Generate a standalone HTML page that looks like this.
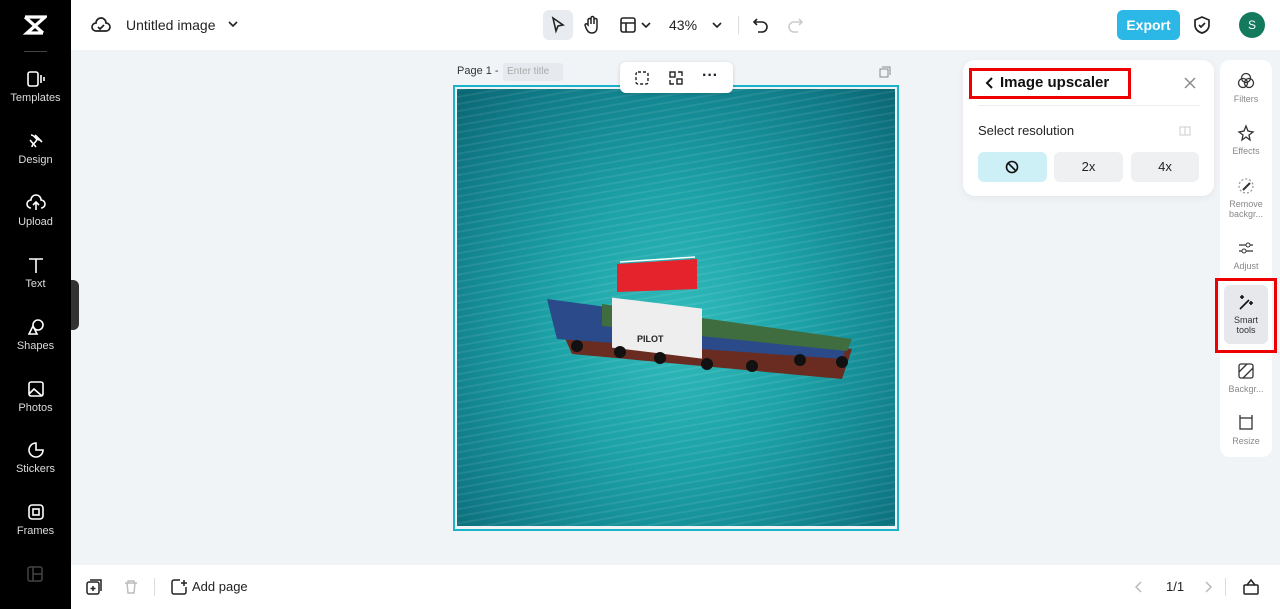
<!DOCTYPE html>
<html><head><meta charset="utf-8"><style>
*{margin:0;padding:0;box-sizing:border-box}
body{width:1280px;height:609px;overflow:hidden;font-family:"Liberation Sans",sans-serif;background:#f1f4f7;position:relative;color:#1f2329}
.abs{position:absolute}
#side{left:0;top:0;width:71px;height:609px;background:#000;color:#fff}
.si{position:absolute;left:0;width:71px;text-align:center;font-size:11px;color:#ddd}
.si svg{display:block;margin:0 auto 4px}
#top{left:71px;top:0;width:1209px;height:50px;background:#fff}
#bot{left:71px;top:565px;width:1209px;height:44px;background:#fff}
.rt{position:absolute;left:0;width:52px;text-align:center;font-size:9px;color:#888;line-height:10px}
.rt svg{display:block;margin:0 auto 4px}
</style></head><body>
<div id="side" class="abs">
 <svg class="abs" style="left:23px;top:14px" width="24" height="22" viewBox="0 0 24 22"><path d="M2 3h20L4 19h16M2 3l18 16M22 3L4 19" stroke="#fff" stroke-width="3.2" fill="none"/></svg>
 <div class="abs" style="left:24px;top:51px;width:23px;height:1px;background:#444"></div>
 <div class="si" style="top:70px"><svg width="20" height="18" viewBox="0 0 20 18"><rect x="2" y="2" width="10" height="14" rx="2" stroke="#fff" stroke-width="1.6" fill="none"/><path d="M15 5v8M18 7v4" stroke="#fff" stroke-width="1.6"/></svg>Templates</div>
 <div class="si" style="top:132px"><svg width="20" height="18" viewBox="0 0 20 18"><path d="M5 3c4 0 4 5 9 5M6 15c0-4 5-4 5-9M4 8l6 7M9 3l7 7" stroke="#fff" stroke-width="1.6" fill="none"/></svg>Design</div>
 <div class="si" style="top:194px"><svg width="20" height="18" viewBox="0 0 20 18"><path d="M5 14a4 4 0 0 1 0-8a5 5 0 0 1 10 0a4 4 0 0 1 0 8M10 9v7M7 11l3-3 3 3" stroke="#fff" stroke-width="1.6" fill="none"/></svg>Upload</div>
 <div class="si" style="top:256px"><svg width="20" height="18" viewBox="0 0 20 18"><path d="M3 3h14M10 3v14" stroke="#fff" stroke-width="1.6"/></svg>Text</div>
 <div class="si" style="top:318px"><svg width="20" height="18" viewBox="0 0 20 18"><circle cx="12" cy="7" r="5" stroke="#fff" stroke-width="1.6" fill="none"/><path d="M3 16l4-8 4 8z" stroke="#fff" stroke-width="1.6" fill="none"/></svg>Shapes</div>
 <div class="si" style="top:380px"><svg width="20" height="18" viewBox="0 0 20 18"><rect x="3" y="2" width="14" height="14" rx="2" stroke="#fff" stroke-width="1.6" fill="none"/><path d="M3 14l5-5 8 7" stroke="#fff" stroke-width="1.6" fill="none"/></svg>Photos</div>
 <div class="si" style="top:441px"><svg width="20" height="18" viewBox="0 0 20 18"><path d="M17 9a7 7 0 1 1-7-7v7z" stroke="#fff" stroke-width="1.6" fill="none"/></svg>Stickers</div>
 <div class="si" style="top:503px"><svg width="20" height="18" viewBox="0 0 20 18"><rect x="3" y="2" width="14" height="14" rx="3" stroke="#fff" stroke-width="1.6" fill="none"/><rect x="7" y="6" width="6" height="6" stroke="#fff" stroke-width="1.6" fill="none"/></svg>Frames</div>
 <svg class="abs" style="left:27px;top:566px" width="16" height="16"><rect x="1" y="1" width="14" height="14" rx="2" stroke="#444" stroke-width="1.5" fill="none"/><path d="M6 1v14M6 8h9" stroke="#444" stroke-width="1.5"/></svg>
 <div class="abs" style="left:71px;top:280px;width:8px;height:50px;background:#333;border-radius:0 6px 6px 0"></div>
</div>
<div id="top" class="abs">
 <svg class="abs" style="left:20px;top:16px" width="20" height="18" viewBox="0 0 20 18"><path d="M5 15a4 4 0 0 1 0-8a5 5 0 0 1 10 0a4 4 0 0 1 0 8z M7 11l2 2 4-4" stroke="#222" stroke-width="1.7" fill="none"/></svg>
 <div class="abs" style="left:55px;top:17px;font-size:14px;color:#222">Untitled image</div>
 <svg class="abs" style="left:157px;top:20px" width="10" height="8"><path d="M1 2l4 4 4-4" stroke="#222" stroke-width="1.6" fill="none"/></svg>
 <div class="abs" style="left:472px;top:10px;width:30px;height:30px;background:#e8ebef;border-radius:6px"></div>
 <svg class="abs" style="left:479px;top:16px" width="16" height="18"><path d="M3 2l10 7-5 1-2 5z" stroke="#222" stroke-width="1.6" fill="none"/></svg>
 <svg class="abs" style="left:512px;top:15px" width="18" height="20"><path d="M5 10V5a1.5 1.5 0 0 1 3 0v4V3a1.5 1.5 0 0 1 3 0v6V5a1.5 1.5 0 0 1 3 0v7c0 4-2 6-5 6s-4-1-6-5l-1-3a1.3 1.3 0 0 1 2-1z" stroke="#222" stroke-width="1.5" fill="none"/></svg>
 <svg class="abs" style="left:548px;top:16px" width="18" height="18"><rect x="2" y="2" width="14" height="14" rx="2" stroke="#222" stroke-width="1.6" fill="none"/><path d="M2 7h14M7 7v9" stroke="#222" stroke-width="1.6"/></svg>
 <svg class="abs" style="left:570px;top:21px" width="10" height="8"><path d="M1 2l4 4 4-4" stroke="#222" stroke-width="1.6" fill="none"/></svg>
 <div class="abs" style="left:598px;top:17px;font-size:14px;color:#222">43%</div>
 <svg class="abs" style="left:641px;top:21px" width="10" height="8"><path d="M1 2l4 4 4-4" stroke="#222" stroke-width="1.6" fill="none"/></svg>
 <div class="abs" style="left:667px;top:16px;width:1px;height:18px;background:#ddd"></div>
 <svg class="abs" style="left:681px;top:16px" width="18" height="18"><path d="M5 3L2 6l3 3M2 6h8a5 5 0 0 1 0 10H6" stroke="#222" stroke-width="1.6" fill="none"/></svg>
 <svg class="abs" style="left:715px;top:16px" width="18" height="18"><path d="M13 3l3 3-3 3M16 6H8a5 5 0 0 0 0 10h4" stroke="#ccc" stroke-width="1.6" fill="none"/></svg>
 <div class="abs" style="left:1046px;top:10px;width:63px;height:30px;background:#2cb8e6;border-radius:6px;color:#fff;font-weight:bold;font-size:14px;text-align:center;line-height:30px">Export</div>
 <svg class="abs" style="left:1122px;top:15px" width="18" height="20"><path d="M9 2l7 3v5c0 4-3 7-7 8-4-1-7-4-7-8V5z M6 10l2 2 4-4" stroke="#222" stroke-width="1.7" fill="none"/></svg>
 <div class="abs" style="left:1168px;top:12px;width:26px;height:26px;border-radius:50%;background:#137a5e;color:#fff;font-size:12px;text-align:center;line-height:26px">S</div>
</div>
<div class="abs" style="left:457px;top:65px;font-size:11px;color:#333">Page 1 -</div>
<div class="abs" style="left:503px;top:63px;width:60px;height:18px;background:#e6e9ed;border-radius:3px;font-size:10px;color:#aaa;line-height:18px;padding-left:4px">Enter title</div>
<svg class="abs" style="left:879px;top:66px" width="12" height="12"><rect x="1" y="3" width="8" height="8" stroke="#888" fill="none"/><path d="M3 1h8v8" stroke="#888" fill="none"/></svg>
<div class="abs" style="left:453px;top:85px;width:446px;height:446px;border:2px solid #1bb3c9"></div>
<div class="abs" style="left:457px;top:89px;width:438px;height:437px;overflow:hidden;background:radial-gradient(ellipse at 50% 55%,#32bcbb 0%,#1ca2a7 40%,#107c88 80%,#0b6673 100%)">
 <div class="abs" style="left:0;top:0;width:438px;height:437px;background:repeating-linear-gradient(170deg,rgba(255,255,255,.08) 0 2px,transparent 2px 7px)"></div>
 <svg class="abs" style="left:85px;top:165px" width="330" height="135" viewBox="0 0 330 135">
  <path d="M10 55l300 40-10 30L30 100z" fill="#6a2c20"/>
  <path d="M5 45l300 40-4 20L15 85z" fill="#2a4a8a"/>
  <path d="M60 50l250 35-5 12L60 72z" fill="#3f6d3f"/>
  <rect x="70" y="35" width="90" height="50" fill="#eeeeee" transform="skewY(7)"/>
  <path d="M75 10l80 -5 0 30-80 3z" fill="#e4232c"/>
  <path d="M78 8l75-5" stroke="#fff" stroke-width="1.5"/>
  <text x="95" y="88" font-size="9" font-weight="bold" fill="#222" font-family="Liberation Sans">PILOT</text>
  <circle cx="35" cy="92" r="6" fill="#111"/><circle cx="78" cy="98" r="6" fill="#111"/><circle cx="118" cy="104" r="6" fill="#111"/><circle cx="165" cy="110" r="6" fill="#111"/><circle cx="210" cy="112" r="6" fill="#111"/><circle cx="258" cy="106" r="6" fill="#111"/><circle cx="300" cy="108" r="6" fill="#111"/>
 </svg>
</div>
<div class="abs" style="left:620px;top:62px;width:113px;height:31px;background:#fff;border-radius:6px;box-shadow:0 1px 4px rgba(0,0,0,.15)">
 <svg class="abs" style="left:14px;top:8px" width="16" height="16"><rect x="2" y="2" width="12" height="12" rx="2" stroke="#222" stroke-width="1.4" fill="none" stroke-dasharray="3 2"/></svg>
 <svg class="abs" style="left:48px;top:8px" width="16" height="16"><rect x="2" y="2" width="5" height="5" stroke="#222" stroke-width="1.4" fill="none"/><rect x="9" y="9" width="5" height="5" stroke="#222" stroke-width="1.4" fill="none"/><path d="M10 2h4v4M2 10v4h4" stroke="#222" stroke-width="1.4" fill="none"/></svg>
 <div class="abs" style="left:82px;top:5px;font-size:16px;font-weight:bold">···</div>
</div>
<div class="abs" style="left:963px;top:60px;width:251px;height:136px;background:#fff;border-radius:12px;box-shadow:0 2px 8px rgba(0,0,0,.06)">
 <div class="abs" style="left:6px;top:8px;width:162px;height:31px;border:3px solid #e00"></div>
 <svg class="abs" style="left:21px;top:16px" width="10" height="14"><path d="M8 2L3 7l5 5" stroke="#111" stroke-width="2" fill="none"/></svg>
 <div class="abs" style="left:37px;top:14px;font-size:15px;font-weight:bold;color:#111">Image upscaler</div>
 <svg class="abs" style="left:220px;top:16px" width="14" height="14"><path d="M2 2l10 10M12 2L2 12" stroke="#888" stroke-width="1.4"/></svg>
 <div class="abs" style="left:15px;top:45px;width:222px;height:1px;background:#eee"></div>
 <div class="abs" style="left:15px;top:63px;font-size:13px;color:#222">Select resolution</div>
 <svg class="abs" style="left:216px;top:65px" width="12" height="12"><rect x="1" y="2" width="10" height="8" stroke="#ccc" fill="none"/><path d="M6 2v8" stroke="#ccc"/></svg>
 <div class="abs" style="left:15px;top:92px;width:69px;height:30px;background:#cdf0f7;border-radius:6px"></div>
 <svg class="abs" style="left:42px;top:100px" width="14" height="14"><circle cx="7" cy="7" r="5.5" stroke="#111" stroke-width="1.6" fill="none"/><path d="M3 3l8 8" stroke="#111" stroke-width="1.6"/></svg>
 <div class="abs" style="left:91px;top:92px;width:69px;height:30px;background:#eef0f2;border-radius:6px;text-align:center;line-height:30px;font-size:13px">2x</div>
 <div class="abs" style="left:168px;top:92px;width:68px;height:30px;background:#eef0f2;border-radius:6px;text-align:center;line-height:30px;font-size:13px">4x</div>
</div>
<div class="abs" style="left:1220px;top:60px;width:52px;height:397px;background:#fff;border-radius:10px">
 <div class="rt" style="top:12px"><svg width="18" height="18"><circle cx="9" cy="6" r="4.5" stroke="#333" stroke-width="1.3" fill="none"/><circle cx="6" cy="11" r="4.5" stroke="#333" stroke-width="1.3" fill="none"/><circle cx="12" cy="11" r="4.5" stroke="#333" stroke-width="1.3" fill="none"/></svg>Filters</div>
 <div class="rt" style="top:64px"><svg width="18" height="18"><path d="M9 2l2 5 5 1-4 3 1 5-4-3-4 3 1-5-4-3 5-1z" stroke="#333" stroke-width="1.3" fill="none"/></svg>Effects</div>
 <div class="rt" style="top:117px"><svg width="18" height="18"><circle cx="9" cy="9" r="7" stroke="#999" stroke-width="1.3" fill="none" stroke-dasharray="2 2"/><path d="M6 13l7-7" stroke="#333" stroke-width="2"/></svg>Remove<br>backgr...</div>
 <div class="rt" style="top:179px"><svg width="18" height="18"><path d="M2 6h14M2 12h14" stroke="#333" stroke-width="1.3"/><circle cx="11" cy="6" r="2" fill="#fff" stroke="#333"/><circle cx="7" cy="12" r="2" fill="#fff" stroke="#333"/></svg>Adjust</div>
 <div class="abs" style="left:4px;top:225px;width:44px;height:59px;background:#e6e8eb;border-radius:6px"></div>
 <div class="rt" style="top:233px;color:#333"><svg width="18" height="18"><path d="M3 16l9-9M5 2v4M3 4h4M14 8v4M12 10h4" stroke="#111" stroke-width="1.6"/></svg>Smart<br>tools</div>
 <div class="rt" style="top:302px"><svg width="18" height="18"><rect x="2" y="2" width="14" height="14" rx="2" stroke="#333" stroke-width="1.3" fill="none"/><path d="M2 10l8-8M6 16l10-10" stroke="#333" stroke-width="1.3"/></svg>Backgr...</div>
 <div class="rt" style="top:354px"><svg width="18" height="18"><rect x="3" y="4" width="12" height="11" stroke="#333" stroke-width="1.3" fill="none"/><path d="M3 1v3M15 1v3" stroke="#333" stroke-width="1.3"/></svg>Resize</div>
</div>
<div class="abs" style="left:1215px;top:278px;width:62px;height:75px;border:3px solid #e00"></div>
<div id="bot" class="abs">
 <svg class="abs" style="left:14px;top:13px" width="18" height="18"><rect x="2" y="4" width="12" height="12" rx="2" stroke="#222" stroke-width="1.5" fill="none"/><path d="M5 2h11v11M8 8v5M5.5 10.5h5" stroke="#222" stroke-width="1.5" fill="none"/></svg>
 <svg class="abs" style="left:52px;top:14px" width="16" height="16"><path d="M2 4h12M5 4V2h6v2M4 4l1 10h6l1-10" stroke="#bbb" stroke-width="1.4" fill="none"/></svg>
 <div class="abs" style="left:83px;top:13px;width:1px;height:18px;background:#ddd"></div>
 <svg class="abs" style="left:99px;top:13px" width="18" height="18"><path d="M10 2H4a2 2 0 0 0-2 2v10a2 2 0 0 0 2 2h10a2 2 0 0 0 2-2V9M14 2v6M11 5h6" stroke="#222" stroke-width="1.5" fill="none"/></svg>
 <div class="abs" style="left:121px;top:14px;font-size:13px;color:#222">Add page</div>
 <svg class="abs" style="left:1062px;top:15px" width="10" height="14"><path d="M8 2L3 7l5 5" stroke="#bbb" stroke-width="1.5" fill="none"/></svg>
 <div class="abs" style="left:1095px;top:14px;font-size:13px;color:#222">1/1</div>
 <svg class="abs" style="left:1133px;top:15px" width="10" height="14"><path d="M2 2l5 5-5 5" stroke="#bbb" stroke-width="1.5" fill="none"/></svg>
 <div class="abs" style="left:1154px;top:13px;width:1px;height:18px;background:#ddd"></div>
 <svg class="abs" style="left:1171px;top:13px" width="18" height="18"><rect x="2" y="7" width="14" height="9" rx="1" stroke="#222" stroke-width="1.5" fill="none"/><path d="M5 7l4-5 4 5" stroke="#222" stroke-width="1.5" fill="none"/></svg>
</div>
</body></html>
